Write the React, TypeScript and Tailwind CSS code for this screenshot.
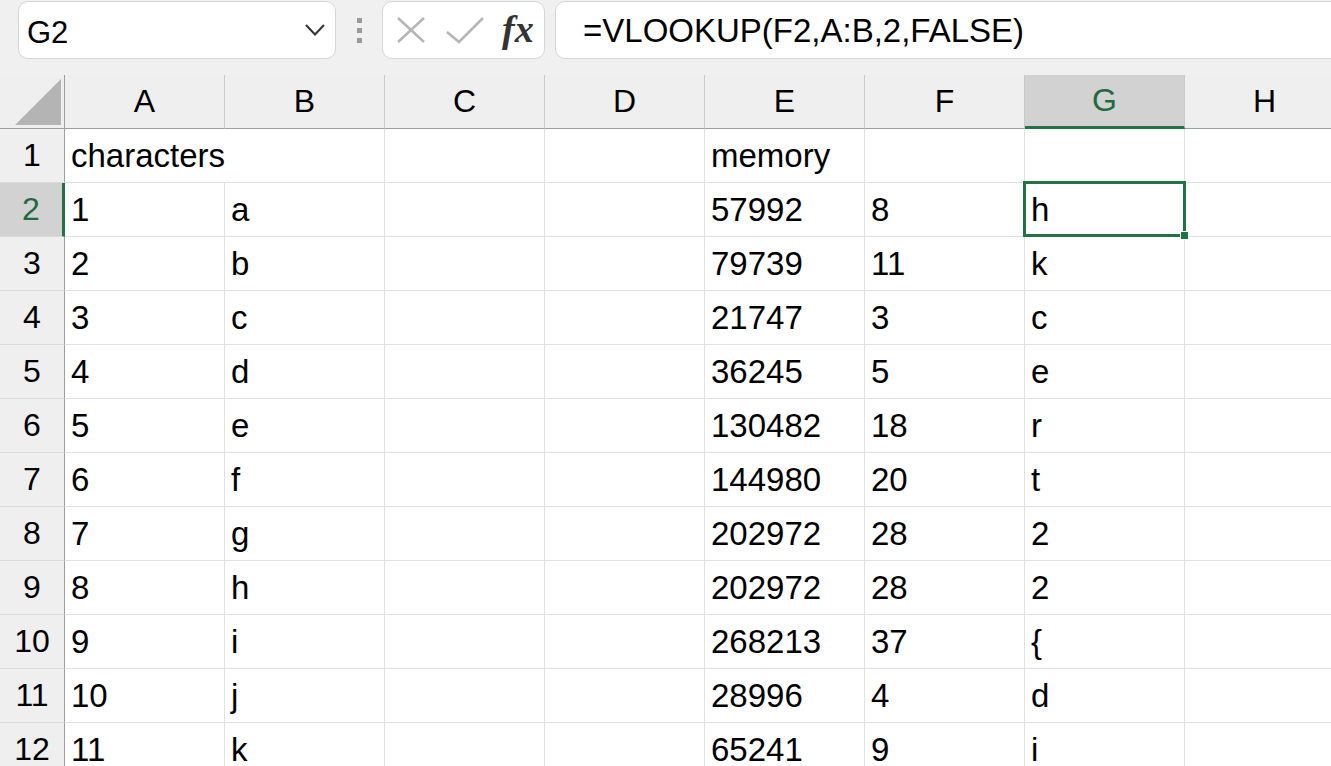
import React from 'react'

const GREEN = '#217346'

const columns = ['A', 'B', 'C', 'D', 'E', 'F', 'G', 'H']

type Row = { a: string; b: string; e: string; f: string; g: string }

const rows: Row[] = [
  { a: '1', b: 'a', e: '57992', f: '8', g: 'h' },
  { a: '2', b: 'b', e: '79739', f: '11', g: 'k' },
  { a: '3', b: 'c', e: '21747', f: '3', g: 'c' },
  { a: '4', b: 'd', e: '36245', f: '5', g: 'e' },
  { a: '5', b: 'e', e: '130482', f: '18', g: 'r' },
  { a: '6', b: 'f', e: '144980', f: '20', g: 't' },
  { a: '7', b: 'g', e: '202972', f: '28', g: '2' },
  { a: '8', b: 'h', e: '202972', f: '28', g: '2' },
  { a: '9', b: 'i', e: '268213', f: '37', g: '{' },
  { a: '10', b: 'j', e: '28996', f: '4', g: 'd' },
  { a: '11', b: 'k', e: '65241', f: '9', g: 'i' },
]

function Cell({ value, wide, children }: { value?: string; wide?: boolean; children?: React.ReactNode }) {
  return (
    <div
      className={`relative shrink-0 h-[54px] flex items-center pl-[6px] border-r border-b border-[#e1e1e1] text-[33px] leading-[33px] text-black whitespace-nowrap ${
        wide ? 'w-[320px]' : 'w-[160px]'
      }`}
    >
      {value}
      {children}
    </div>
  )
}

function RowHeader({ n, active }: { n: number; active?: boolean }) {
  return (
    <div
      className={`shrink-0 w-[65px] h-[54px] flex items-center justify-center border-b border-[#dadada] text-[32px] leading-[33px] ${
        active
          ? 'bg-[#d2d2d2] border-r-[3px] border-r-[#217346] text-[#1e6b41]'
          : 'bg-[#efefef] border-r border-r-[#9e9e9e] text-black'
      }`}
    >
      {n}
    </div>
  )
}

export default function App() {
  return (
    <div className="w-full h-[766px] overflow-hidden bg-white font-['Liberation_Sans',Arial,sans-serif]">
      {/* Formula bar */}
      <div className="h-[75px] bg-[#f0f0f0] flex items-start pt-[1px]">
        <div className="ml-[18px] w-[318px] h-[58px] shrink-0 rounded-[10px] border border-[#d6d6d6] bg-white flex items-center justify-between pl-[8px] pr-[9px]">
          <span className="text-[31px] leading-[31px] text-black pt-[4px]">G2</span>
          <svg width="22" height="14" viewBox="0 0 22 14">
            <path d="M2 2 L11 11.5 L20 2" fill="none" stroke="#333" strokeWidth="2" />
          </svg>
        </div>
        <div className="ml-[21px] w-[5px] h-[58px] shrink-0 flex flex-col items-center justify-center gap-[5px]">
          <div className="w-[5px] h-[5px] bg-[#9a9a9a]" />
          <div className="w-[5px] h-[5px] bg-[#9a9a9a]" />
          <div className="w-[5px] h-[5px] bg-[#9a9a9a]" />
        </div>
        <div className="ml-[20px] w-[163px] h-[58px] shrink-0 rounded-[10px] border border-[#d6d6d6] bg-white flex items-center pl-[13px]">
          <svg width="30" height="28" viewBox="0 0 30 28">
            <path d="M2 2 L28 26 M28 2 L2 26" fill="none" stroke="#b5b5b5" strokeWidth="2.5" />
          </svg>
          <svg className="ml-[20px]" width="38" height="28" viewBox="0 0 38 28">
            <path d="M1 16 L13 26 L37 2" fill="none" stroke="#b5b5b5" strokeWidth="2.5" />
          </svg>
          <span className="ml-[18px] font-['Liberation_Serif',serif] italic font-bold text-[38px] leading-[38px] text-[#333] -mt-[2px]">
            fx
          </span>
        </div>
        <div className="ml-[10px] -mr-[12px] flex-1 h-[58px] rounded-[10px] border border-[#d6d6d6] bg-white flex items-center pl-[27px]">
          <span className="text-[33px] leading-[33px] text-black whitespace-nowrap">=VLOOKUP(F2,A:B,2,FALSE)</span>
        </div>
      </div>

      {/* Column headers */}
      <div className="flex h-[54px] bg-[#efefef]">
        <div className="shrink-0 w-[65px] h-[54px] border-r border-b border-[#9e9e9e] relative">
          <svg className="absolute left-0 top-0" width="64" height="53" viewBox="0 0 64 53">
            <polygon points="15,50 61,50 61,4" fill="#b4b4b4" />
          </svg>
        </div>
        {columns.map((c) => (
          <div
            key={c}
            className={`shrink-0 w-[160px] h-[54px] flex items-center justify-center border-r border-r-[#c9c9c9] text-[32px] leading-[33px] ${
              c === 'G'
                ? 'bg-[#d2d2d2] border-b-[3px] border-b-[#217346] text-[#1e6b41]'
                : 'border-b border-b-[#9e9e9e] text-black'
            }`}
          >
            {c}
          </div>
        ))}
      </div>

      {/* Row 1 */}
      <div className="flex">
        <RowHeader n={1} />
        <Cell value="characters" wide />
        <Cell />
        <Cell />
        <Cell value="memory" />
        <Cell />
        <Cell />
        <Cell />
      </div>

      {rows.map((r, i) => {
        const n = i + 2
        const active = n === 2
        return (
          <div key={n} className="flex">
            <RowHeader n={n} active={active} />
            <Cell value={r.a} />
            <Cell value={r.b} />
            <Cell />
            <Cell />
            <Cell value={r.e} />
            <Cell value={r.f} />
            <Cell value={r.g}>
              {active && (
                <>
                  <div
                    className="absolute -top-[2px] -left-[2px] -right-[2px] -bottom-[1px] border-[3px] z-10 pointer-events-none"
                    style={{ borderColor: GREEN }}
                  />
                  <div className="absolute -right-[5px] -bottom-[4px] w-[9px] h-[9px] bg-[#217346] border border-white z-20" />
                </>
              )}
            </Cell>
            <Cell />
          </div>
        )
      })}
    </div>
  )
}
